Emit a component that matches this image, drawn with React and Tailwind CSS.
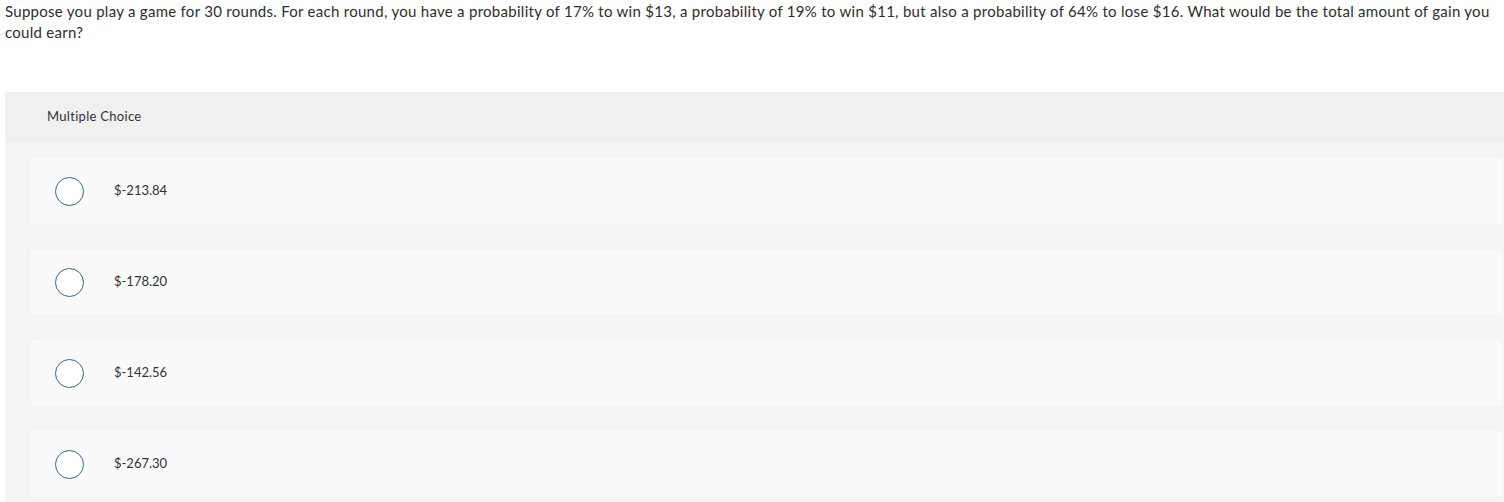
import React from 'react';

const choices = ['$-213.84', '$-178.20', '$-142.56', '$-267.30'];

const ChoiceRow = ({ label }) => (
  <div className="flex items-center h-[66px] bg-[#fafafa] rounded-[3px] pl-[24px]">
    <span className="w-[29px] h-[29px] rounded-full border-[1.5px] border-[#34628f] bg-white shrink-0" />
    <span className="ml-[30px] text-[13px] text-[#333]">{label}</span>
  </div>
);

export default function App() {
  return (
    <div className="bg-white min-h-screen font-['Lato','Liberation_Sans',sans-serif] text-[#333]">
      <p className="px-[5px] pt-[1px] text-[15px] leading-[21px] tracking-[0.28px] text-[#2e2e2e]">
        Suppose you play a game for 30 rounds. For each round, you have a probability of 17% to win $13, a probability of 19% to win $11, but also a probability of 64% to lose $16. What would be the total amount of gain you could earn?
      </p>
      <div className="ml-[5px] mt-[49px]">
        <div className="h-[50px] bg-[#f0f0f0] flex items-center pl-[42px] text-[13px] tracking-[0.3px] text-[#333]">
          Multiple Choice
        </div>
        <div className="bg-[#f5f5f5] pl-[26px] pr-[2px] pt-[16px] pb-[8px] flex flex-col gap-[25px]">
          {choices.map((c) => (
            <ChoiceRow key={c} label={c} />
          ))}
        </div>
      </div>
    </div>
  );
}
